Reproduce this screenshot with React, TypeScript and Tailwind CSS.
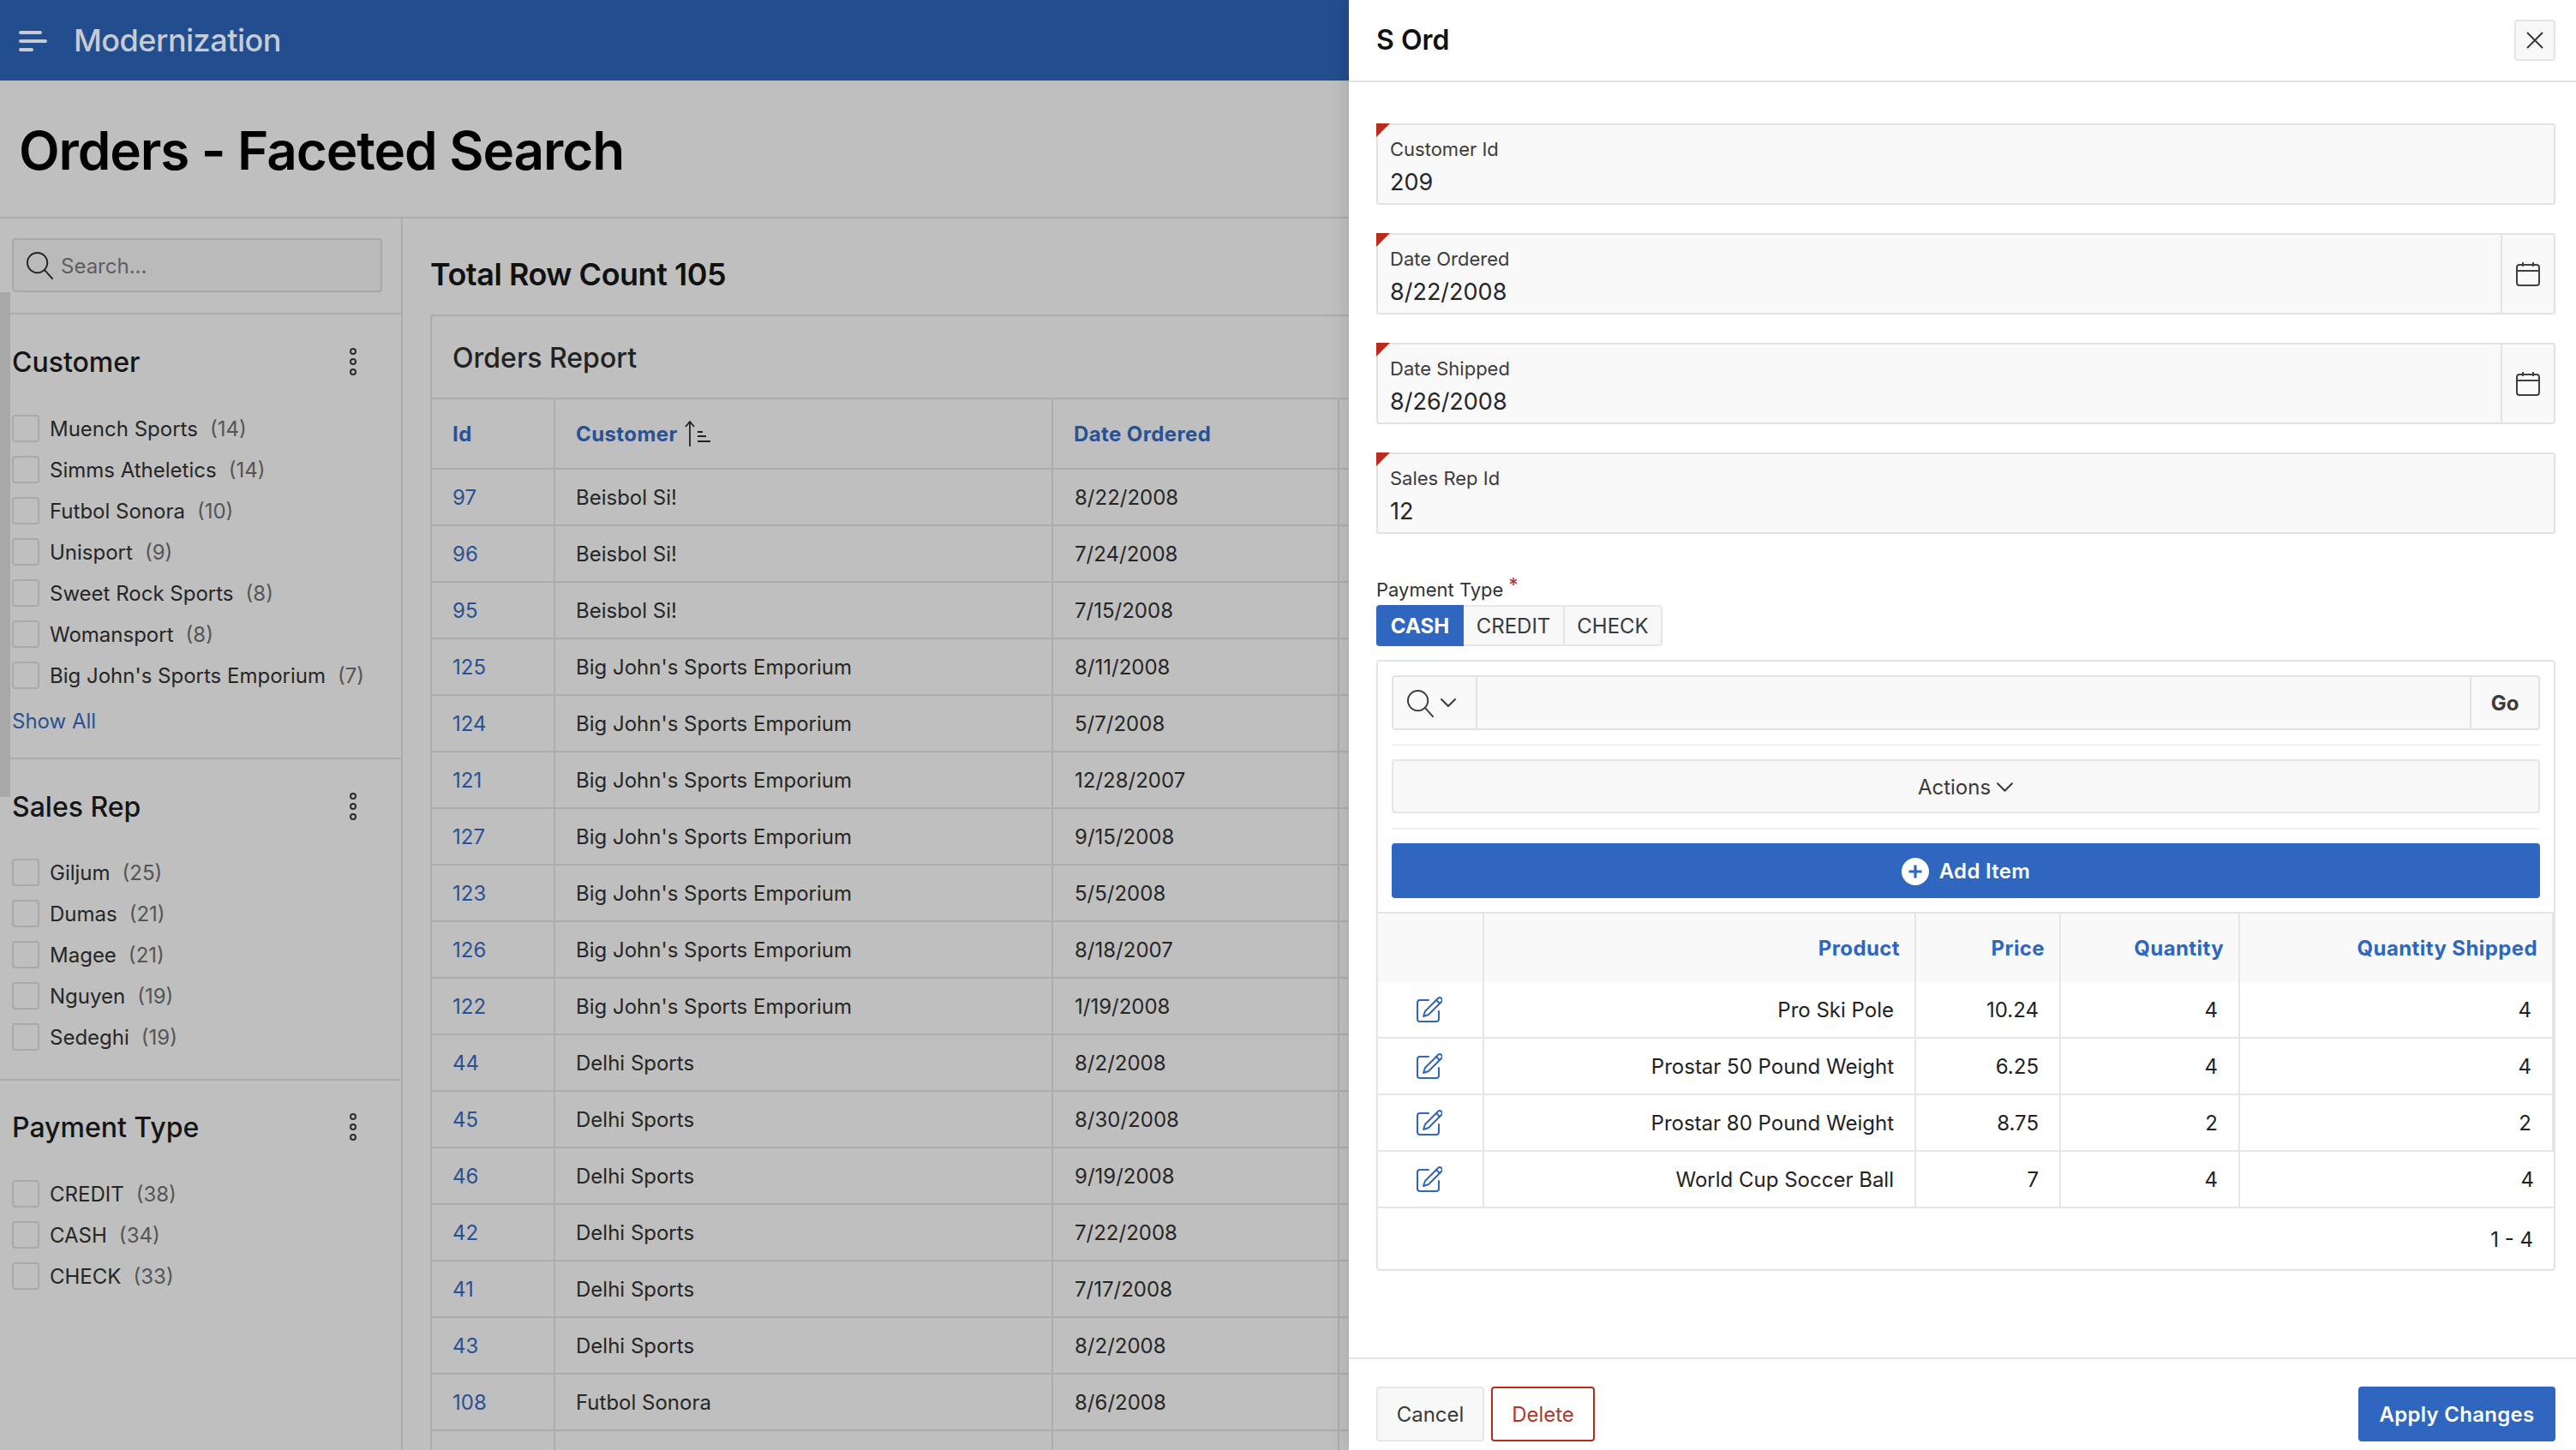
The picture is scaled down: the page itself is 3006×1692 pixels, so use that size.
import { Fragment } from "react";

const facets = [
  {
    title: "Customer",
    showAll: true,
    items: [
      ["Muench Sports", 14],
      ["Simms Atheletics", 14],
      ["Futbol Sonora", 10],
      ["Unisport", 9],
      ["Sweet Rock Sports", 8],
      ["Womansport", 8],
      ["Big John's Sports Emporium", 7],
    ],
  },
  {
    title: "Sales Rep",
    items: [
      ["Giljum", 25],
      ["Dumas", 21],
      ["Magee", 21],
      ["Nguyen", 19],
      ["Sedeghi", 19],
    ],
  },
  {
    title: "Payment Type",
    items: [
      ["CREDIT", 38],
      ["CASH", 34],
      ["CHECK", 33],
    ],
  },
];

const orders = [
  ["97", "Beisbol Si!", "8/22/2008"],
  ["96", "Beisbol Si!", "7/24/2008"],
  ["95", "Beisbol Si!", "7/15/2008"],
  ["125", "Big John's Sports Emporium", "8/11/2008"],
  ["124", "Big John's Sports Emporium", "5/7/2008"],
  ["121", "Big John's Sports Emporium", "12/28/2007"],
  ["127", "Big John's Sports Emporium", "9/15/2008"],
  ["123", "Big John's Sports Emporium", "5/5/2008"],
  ["126", "Big John's Sports Emporium", "8/18/2007"],
  ["122", "Big John's Sports Emporium", "1/19/2008"],
  ["44", "Delhi Sports", "8/2/2008"],
  ["45", "Delhi Sports", "8/30/2008"],
  ["46", "Delhi Sports", "9/19/2008"],
  ["42", "Delhi Sports", "7/22/2008"],
  ["41", "Delhi Sports", "7/17/2008"],
  ["43", "Delhi Sports", "8/2/2008"],
  ["108", "Futbol Sonora", "8/6/2008"],
  ["", "", ""],
];

const fields = [
  { label: "Customer Id", value: "209" },
  { label: "Date Ordered", value: "8/22/2008", date: true },
  { label: "Date Shipped", value: "8/26/2008", date: true },
  { label: "Sales Rep Id", value: "12" },
];

const lineItems = [
  ["Pro Ski Pole", "10.24", "4", "4"],
  ["Prostar 50 Pound Weight", "6.25", "4", "4"],
  ["Prostar 80 Pound Weight", "8.75", "2", "2"],
  ["World Cup Soccer Ball", "7", "4", "4"],
];

function SearchIcon({ className }: { className: string }) {
  return (
    <svg viewBox="0 0 34 34" className={className} fill="none" stroke="currentColor" strokeWidth="2">
      <circle cx="14" cy="14" r="12" />
      <path d="M22.5 22.5 32 33" strokeLinecap="round" />
    </svg>
  );
}

function Chevron({ className }: { className: string }) {
  return (
    <svg viewBox="0 0 20 12" className={className} fill="none" stroke="currentColor" strokeWidth="2">
      <path d="M2 2l8 8 8-8" strokeLinecap="round" strokeLinejoin="round" />
    </svg>
  );
}

function CalendarIcon() {
  return (
    <svg viewBox="0 0 28 28" className="w-[28px] h-[28px] text-[#404040]" fill="none" stroke="currentColor" strokeWidth="2">
      <rect x="1" y="3" width="26" height="24" rx="3" />
      <path d="M1 10h26M8 0v5M20 0v5" />
    </svg>
  );
}

function EditIcon() {
  return (
    <svg viewBox="0 0 30 30" className="w-[30px] h-[30px] text-[#2e66c0]" fill="none" stroke="currentColor" strokeWidth="2" strokeLinecap="round" strokeLinejoin="round">
      <path d="M14 4H4a3 3 0 0 0-3 3v19a3 3 0 0 0 3 3h19a3 3 0 0 0 3-3V17" />
      <path d="M25 2a2.8 2.8 0 0 1 4 4L14 21l-6 2 2-6z" />
      <path d="M23 4l4 4" />
    </svg>
  );
}

function Kebab() {
  return (
    <svg viewBox="0 0 10 34" className="w-[10px] h-[34px] text-[#2c2c2c]" fill="none" stroke="currentColor" strokeWidth="2">
      <circle cx="5" cy="5" r="3" />
      <circle cx="5" cy="17" r="3" />
      <circle cx="5" cy="29" r="3" />
    </svg>
  );
}

function Facet({ title, items, showAll, tight }: { title: string; items: (string | number)[][]; showAll?: boolean; tight?: boolean }) {
  return (
    <section className="border-b-2 border-[#acacac] pl-[14px] pr-[51px] pt-[35px] last:pt-[34px] pb-[25px] last:border-b-0">
      <div className="flex items-center justify-between h-[40px]">
        <h3 className="pt-[2px] text-[32px] font-medium text-[#151515]">{title}</h3>
        <Kebab />
      </div>
      <ul className={tight ? "mt-[33px]" : "mt-[34px]"}>
        {items.map(([name, count]) => (
          <li key={name} className="flex items-center h-[48px] text-[24px] text-[#262626] whitespace-nowrap">
            <span className="shrink-0 w-[32px] h-[32px] mr-[12px] rounded-[4px] border-2 border-[#a9a9a9]" />
            <span className="pt-[2px]">{name}</span>
            <span className="ml-[14px] pt-[2px] text-[#555555]">({count})</span>
          </li>
        ))}
      </ul>
      {showAll && <div className="mt-[15px] mb-[2px] h-[30px] leading-[30px] text-[24px] text-[#2a5192]">Show All</div>}
    </section>
  );
}

export default function App() {
  return (
    <div className="relative flex w-[3006px] h-[1692px] overflow-hidden bg-white font-['Inter',sans-serif]">
      {/* page behind the dialog */}
      <div className="w-[1574px] shrink-0 h-full overflow-hidden bg-[#bfbfbf]">
        <header className="flex items-center h-[94px] bg-[#224d8f] text-[#c6ccd6]">
          <svg viewBox="0 0 34 24" className="ml-[21px] w-[34px] h-[26px]" fill="none" stroke="currentColor" strokeWidth="4" strokeLinecap="round">
            <path d="M3 3h23M3 13h29M3 23h13" />
          </svg>
          <span className="ml-[31px] text-[36px] font-medium tracking-[-0.5px]">Modernization</span>
        </header>
        <div className="flex items-center h-[161px] pl-[22px] pt-[3px] border-b-2 border-[#acacac]">
          <h1 className="text-[62px] font-semibold text-black tracking-[-1.1px]">Orders - Faceted Search</h1>
        </div>
        <div className="flex h-full">
          <aside className="w-[470px] shrink-0 border-r-2 border-[#acacac]">
            <div className="h-[112px] pt-[23px] pl-[14px] border-b-2 border-[#acacac]">
              <div className="flex items-center w-[432px] h-[63px] rounded-[4px] border-2 border-[#a9a9a9] bg-[#bababa] pl-[14px] text-[24px] text-[#5e5e5e]">
                <SearchIcon className="w-[33px] h-[33px] text-[#222222]" />
                <span className="ml-[8px] pt-[2px]">Search...</span>
              </div>
            </div>
            {facets.map((f) => (
              <Facet key={f.title} title={f.title} items={f.items} showAll={f.showAll} tight={f.title === "Sales Rep"} />
            ))}
          </aside>
          <main className="pl-[32px]">
            <h2 className="h-[112px] pt-[42px] text-[36px] leading-[46px] font-semibold text-[#111111] tracking-[-0.5px] whitespace-nowrap">
              Total Row Count 105
            </h2>
            <div className="w-[1300px] rounded-tl-[4px] border-l-2 border-t-2 border-[#acacac]">
              <div className="flex items-center h-[97px] pl-[24px] pt-[2px] border-b-2 border-[#acacac] text-[32px] font-medium text-[#222222]">
                Orders Report
              </div>
              <div className="grid grid-cols-[144px_581px_334px_200px] text-[24px]">
                {["Id", "Customer", "Date Ordered", ""].map((h, i) => (
                  <div key={i} className="flex items-center h-[82px] pl-[24px] pt-[2px] border-r-2 border-b-2 border-[#acacac] font-bold tracking-[0.4px] text-[#2a5192]">
                    {h}
                    {h === "Customer" && (
                      <svg viewBox="0 0 32 30" className="ml-[7px] -mt-[2px] w-[32px] h-[30px] text-[#222222]" fill="none" stroke="currentColor" strokeWidth="1.8">
                        <path d="M7 30V1M2 7l5-6 5 6M16 13h6M16 18h10M16 24h15" />
                      </svg>
                    )}
                  </div>
                ))}
                {orders.map((o, i) => (
                  <Fragment key={i}>
                    <div className="flex items-center h-[66px] pl-[24px] pt-[2px] border-r-2 border-b-2 border-[#acacac] text-[#2a5192]">{o[0]}</div>
                    <div className="flex items-center h-[66px] pl-[24px] pt-[2px] border-r-2 border-b-2 border-[#acacac] text-[#262626]">{o[1]}</div>
                    <div className="flex items-center h-[66px] pl-[25px] pt-[2px] border-r-2 border-b-2 border-[#acacac] text-[#262626]">{o[2]}</div>
                    <div className="h-[66px] border-r-2 border-b-2 border-[#acacac]" />
                  </Fragment>
                ))}
              </div>
            </div>
          </main>
        </div>
      </div>

      {/* scrollbar of the side column */}
      <div className="absolute left-0 top-[341px] w-[12px] h-[589px] bg-[#a8a8a8]" />

      {/* dialog */}
      <div className="flex flex-col flex-1 h-full bg-white shadow-[-4px_0_20px_rgba(0,0,0,0.1)] z-10">
        <div className="flex items-center justify-between h-[96px] pl-[32px] pr-[24px] border-b-2 border-[#e4e4e4]">
          <h2 className="text-[32px] font-semibold text-[#111111]">S Ord</h2>
          <button className="flex items-center justify-center w-[48px] h-[48px] rounded-[4px] border-2 border-[#e4e4e4] bg-[#f8f8f8] text-[#333333]">
            <svg viewBox="0 0 20 20" className="w-[20px] h-[20px]" fill="none" stroke="currentColor" strokeWidth="1.8">
              <path d="M1 1l18 18M19 1 1 19" />
            </svg>
          </button>
        </div>

        <div className="flex-1 pl-[32px] pr-[24px] pt-[48px]">
          <div className="flex flex-col gap-[33px]">
            {fields.map((f) => (
              <div key={f.label} className="relative flex h-[95px] rounded-[3px] border-2 border-[#e2e2e2] bg-[#f9f9f9]">
                <div className="absolute -left-[2px] -top-[2px] w-[16px] h-[16px] bg-[#b92b1c] [clip-path:polygon(0_0,100%_0,0_100%)]" />
                <div className="flex-1 pl-[14px] pt-[13px]">
                  <div className="text-[22px] leading-[30px] text-[#3c3c3c]">{f.label}</div>
                  <div className="mt-[6px] text-[27px] leading-[36px] text-[#262626]">{f.value}</div>
                </div>
                {f.date && (
                  <div className="flex items-center justify-center w-[62px] border-l-2 border-[#e2e2e2]">
                    <CalendarIcon />
                  </div>
                )}
              </div>
            ))}
          </div>

          <div className="mt-[48px] h-[35px] leading-[34px] text-[22px] text-[#333333]">
            Payment Type <span className="relative -top-[6px] text-[#b92b1c]">*</span>
          </div>
          <div className="flex h-[48px] text-[24px]">
            <div className="flex items-center justify-center w-[102px] pt-[2px] rounded-l-[4px] bg-[#2e66c0] font-bold text-white">CASH</div>
            <div className="flex items-center justify-center w-[118px] pt-[2px] border-2 border-l-0 border-[#e6e6e6] bg-[#f8f8f8] text-[#3a3a3a]">CREDIT</div>
            <div className="flex items-center justify-center w-[114px] pt-[2px] rounded-r-[4px] border-2 border-l-0 border-[#e6e6e6] bg-[#f8f8f8] text-[#3a3a3a]">CHECK</div>
          </div>

          <div className="mt-[16px] h-[713px] rounded-[4px] border-2 border-[#e4e4e4]">
            <div className="px-[16px] pt-[16px]">
              <div className="flex h-[64px] rounded-[4px] border-2 border-[#e2e2e2] bg-[#f9f9f9]">
                <div className="flex items-center w-[98px] pl-[15px] border-r-2 border-[#e2e2e2] text-[#3a3a3a]">
                  <SearchIcon className="w-[33px] h-[33px]" />
                  <Chevron className="ml-[6px] w-[20px] h-[12px]" />
                </div>
                <div className="flex-1" />
                <div className="flex items-center justify-center w-[80px] pt-[1px] border-l-2 border-[#e2e2e2] text-[24px] font-bold text-[#3a3a3a]">Go</div>
              </div>
              <div className="mt-[16px] h-[2px] bg-[#f0f0f0]" />
              <div className="mt-[16px] flex items-center justify-center h-[63px] pt-[2px] rounded-[4px] border-2 border-[#e6e6e6] bg-[#f8f8f8] text-[24px] text-[#3a3a3a]">
                Actions
                <Chevron className="ml-[6px] w-[21px] h-[13px]" />
              </div>
              <div className="mt-[17px] h-[2px] bg-[#f0f0f0]" />
              <div className="mt-[16px] flex items-center justify-center h-[64px] pt-[1px] rounded-[4px] bg-[#2e66c0] text-[24px] font-semibold tracking-[0.3px] text-white">
                <svg viewBox="0 0 32 32" className="w-[32px] h-[32px] mr-[12px]">
                  <circle cx="16" cy="16" r="16" fill="#ffffff" />
                  <path d="M16 8.5v15M8.5 16h15" stroke="#2e66c0" strokeWidth="3.2" />
                </svg>
                Add Item
              </div>
            </div>
            <div className="mt-[16px] border-t-2 border-[#e4e4e4] grid grid-cols-[124px_504px_169px_209px_1fr] text-[24px]">
              {["", "Product", "Price", "Quantity", "Quantity Shipped"].map((h, i) => (
                <div key={i} className="flex items-center justify-end h-[80px] pt-[2px] pr-[17px] last:pr-[14px] border-r-2 last:border-r-0 border-[#e6e6e6] bg-[#f9f9f9] font-bold tracking-[0.4px] text-[#2e66c0]">
                  {h}
                </div>
              ))}
              {lineItems.map((row) => (
                <Fragment key={row[0]}>
                  <div className="flex items-center justify-center h-[66px] pr-[2px] border-r-2 border-b-2 border-[#e6e6e6]">
                    <EditIcon />
                  </div>
                  {row.map((c, i) => (
                    <div key={i} className="flex items-center justify-end h-[66px] pt-[2px] pr-[24px] last:pr-[23px] border-r-2 last:border-r-0 border-b-2 border-[#e6e6e6] text-[#222222]">
                      {c}
                    </div>
                  ))}
                </Fragment>
              ))}
            </div>
            <div className="flex items-center justify-end h-[74px] pt-[2px] pr-[24px] border-t-2 -mt-[2px] border-[#e4e4e4] text-[24px] text-[#222222]">1 - 4</div>
          </div>
        </div>

        <div className="flex items-start h-[108px] pl-[32px] pr-[24px] pt-[32px] border-t-2 border-[#e4e4e4] text-[24px]">
          <button className="w-[126px] h-[64px] pt-[1px] rounded-[4px] border-2 border-[#e6e6e6] bg-[#f8f8f8] text-[#3a3a3a]">Cancel</button>
          <button className="ml-[8px] w-[121px] h-[64px] pt-[1px] rounded-[4px] border-2 border-[#b92b1c] text-[#b0392c]">Delete</button>
          <button className="ml-auto w-[230px] h-[64px] pt-[1px] rounded-[4px] bg-[#2e66c0] font-semibold tracking-[0.3px] text-white">Apply Changes</button>
        </div>
      </div>
    </div>
  );
}
